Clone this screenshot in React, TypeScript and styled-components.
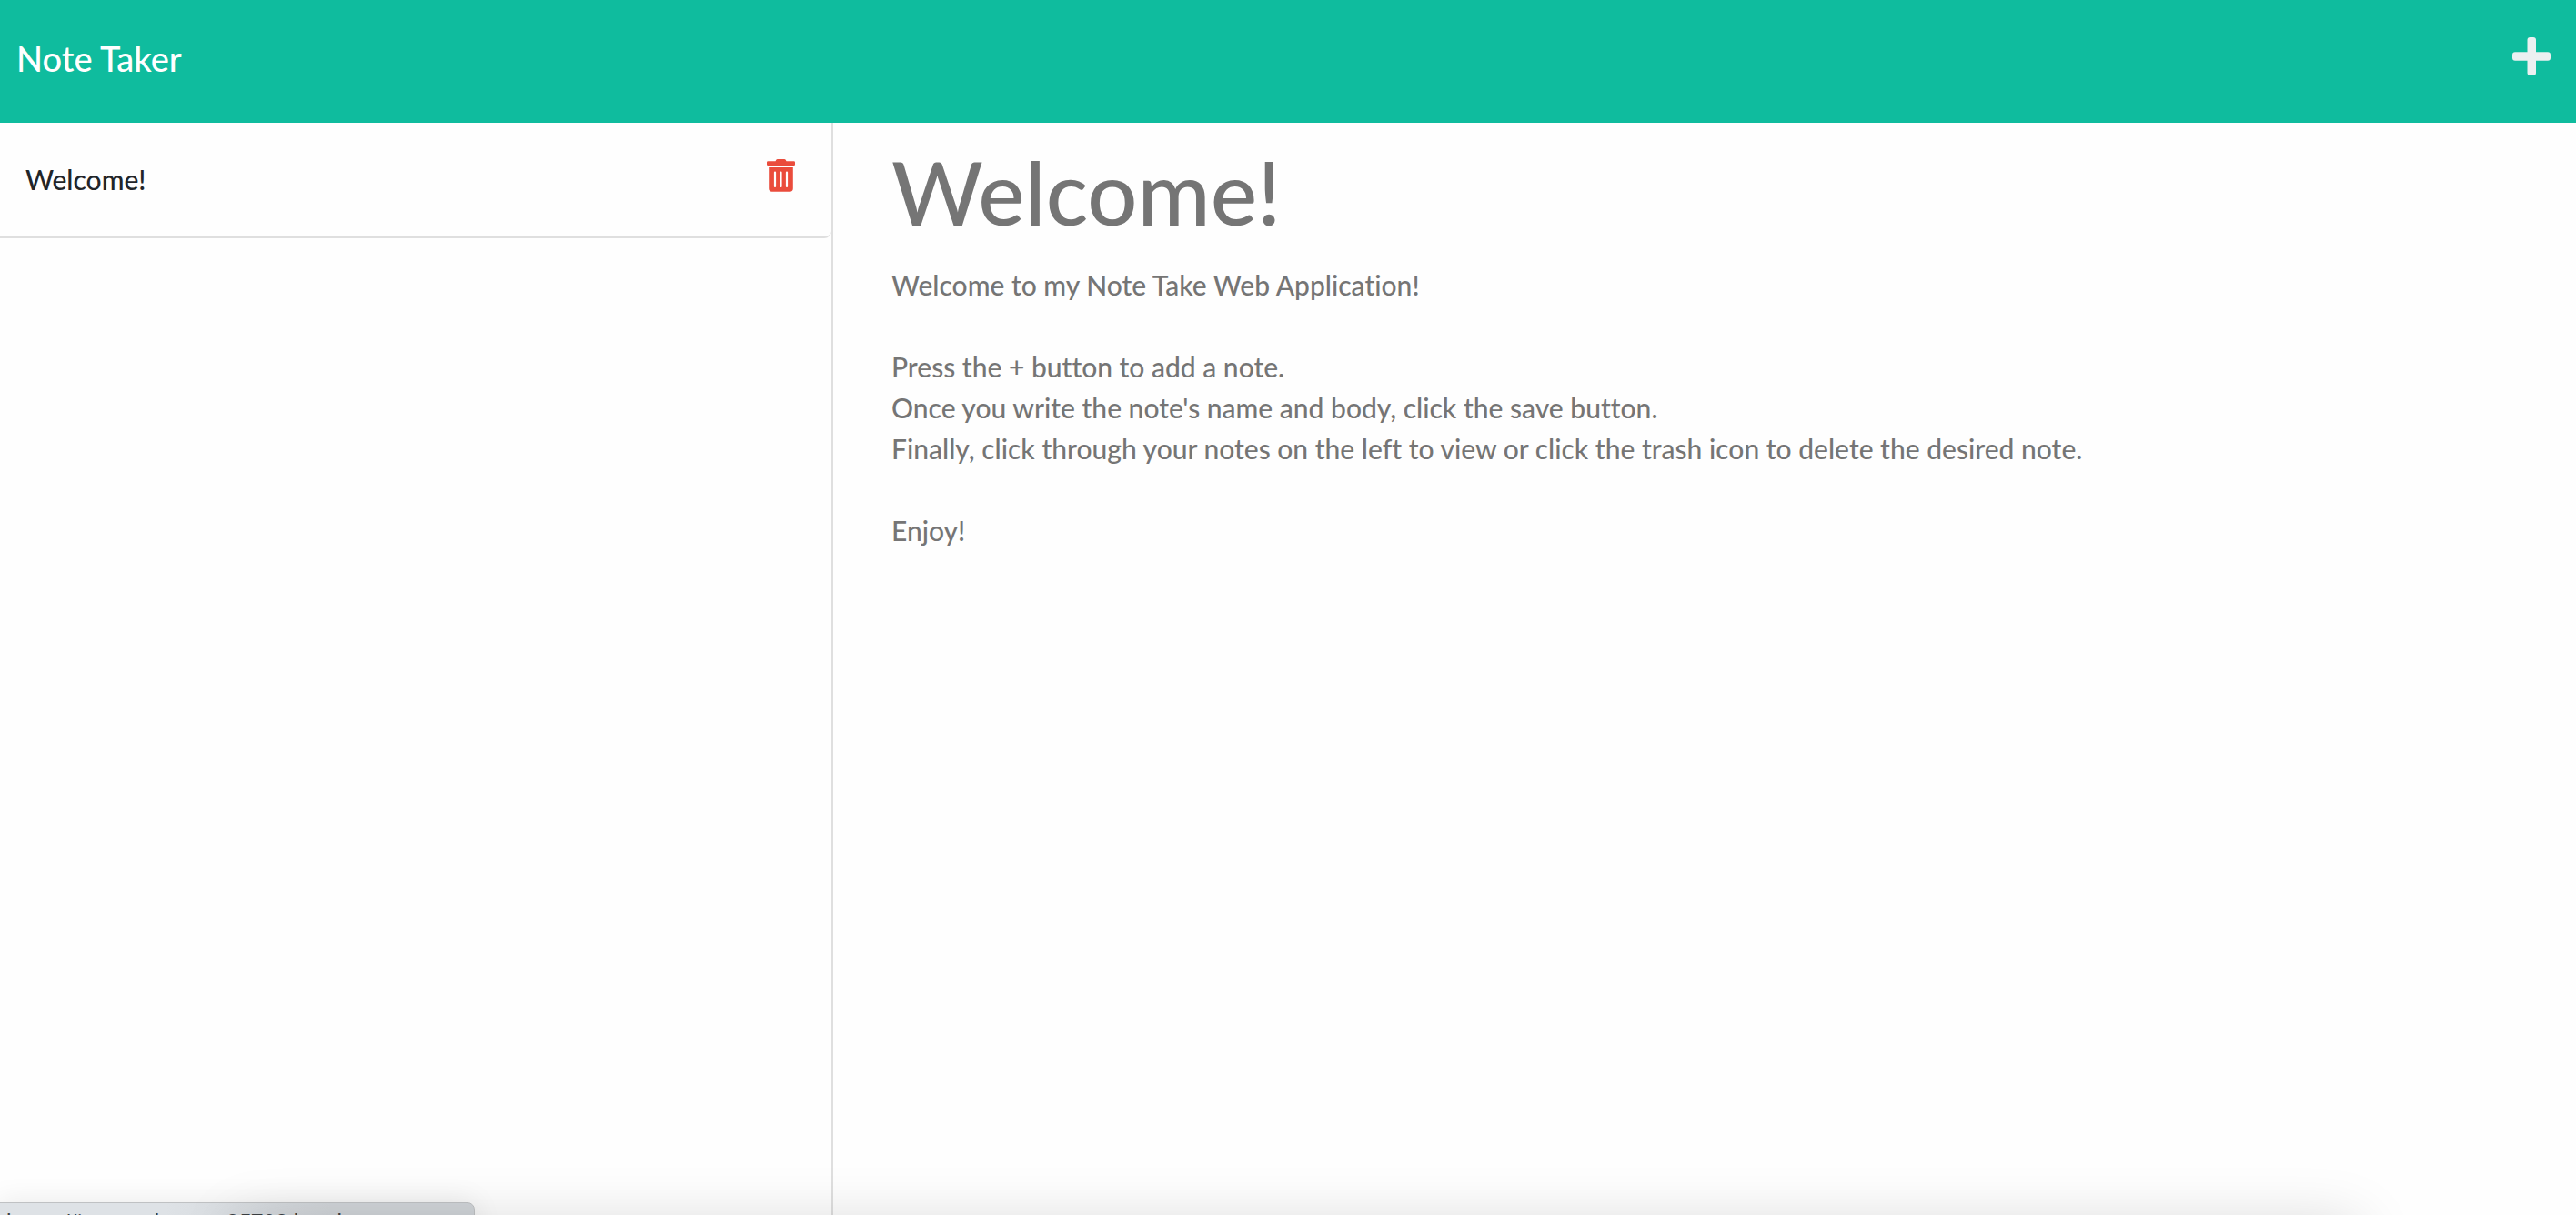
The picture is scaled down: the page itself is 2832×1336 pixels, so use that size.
import React from "react";
import styled, { createGlobalStyle } from "styled-components";

const GlobalStyle = createGlobalStyle`
  *, *::before, *::after { box-sizing: border-box; }
  body {
    margin: 0;
    background: #fefefe;
    color: #212529;
    font-family: "Lato Medium", Lato, "Open Sans", sans-serif;
    font-size: 30px;
    font-weight: 500;
    font-variant-ligatures: none;
    line-height: 45px;
  }
`;

const Page = styled.div`
  position: relative;
  display: flex;
  flex-direction: column;
  height: 100vh;
  overflow: hidden;
`;

const Navbar = styled.header`
  display: flex;
  align-items: flex-start;
  justify-content: space-between;
  padding: 36px 22px 43px 18px;
  background: #0fbc9e;
`;

const Brand = styled.a`
  color: #fff;
  font-size: 38px;
  line-height: 56px;
  text-decoration: none;
`;

const IconButton = styled.button`
  display: flex;
  flex: none;
  padding: 0;
  border: 0;
  background: none;
  color: ${(p) => p.color};
  cursor: pointer;
`;

const Main = styled.main`
  display: grid;
  flex: 1;
  grid-template-columns: calc(100% / 3 - 28px) 1fr;
`;

const Sidebar = styled.aside`
  border-right: 2px solid #dfdfdf;
`;

const NoteList = styled.ul`
  margin: 0;
  padding: 0;
  list-style: none;
`;

const NoteItem = styled.li`
  display: flex;
  align-items: flex-start;
  justify-content: space-between;
  padding: 40px 40px 40px 28px;
  border-bottom: 2px solid #dfdfdf;
  border-bottom-right-radius: 8px;
`;

const NoteLink = styled.a`
  color: inherit;
  text-decoration: none;
`;

const Note = styled.article`
  padding: 16px 64px;
  color: #757575;
`;

const NoteTitle = styled.h1`
  margin: 0 0 20px;
  font-size: 97px;
  font-weight: inherit;
  line-height: 120px;
`;

const NoteText = styled.p`
  margin: 0;
  white-space: pre-wrap;
`;

const BottomShade = styled.div`
  position: absolute;
  bottom: -70px;
  left: 260px;
  right: 240px;
  height: 60px;
  box-shadow: 0 0 64px rgba(0, 0, 0, 0.17);
  pointer-events: none;
`;

const StatusBubble = styled.div`
  position: absolute;
  bottom: -32px;
  left: -2px;
  width: 524px;
  height: 46px;
  padding: 5px 0 0 8px;
  border: 1px solid #bfc1c3;
  border-radius: 0 8px 0 0;
  background: linear-gradient(90deg, #dee2e6 35%, #d0d4d8 70%);
  box-shadow: 0 0 32px rgba(0, 0, 0, 0.09);
  color: #3c4043;
  font-family: Roboto, sans-serif;
  font-size: 24px;
  font-weight: 400;
  line-height: 32px;
  white-space: nowrap;
`;

const PlusIcon = () => (
  <svg width="48" height="48" viewBox="0 0 48 48" fill="currentColor" aria-hidden="true">
    <rect x="16.5" y="5" width="9.5" height="42" rx="3" />
    <rect x="0" y="21.2" width="42" height="9.5" rx="3" />
  </svg>
);

const TrashIcon = () => (
  <svg width="31" height="36" viewBox="0 0 31 36" fill="currentColor" aria-hidden="true">
    <path d="M1.2 2.2H9.5L10.3.8Q10.8 0 11.8 0H19.2Q20.2 0 20.7.8L21.5 2.2H29.8Q31 2.2 31 3.4V5.8Q31 7 29.8 7H1.2Q0 7 0 5.8V3.4Q0 2.2 1.2 2.2Z" />
    <path fillRule="evenodd" d="M2.2 9H28.8V32.3Q28.8 35.7 25.4 35.7H5.6Q2.2 35.7 2.2 32.3ZM9 13.4Q7.9 13.4 7.9 14.5V30Q7.9 31.1 9 31.1Q10.1 31.1 10.1 30V14.5Q10.1 13.4 9 13.4ZM15.5 13.4Q14.4 13.4 14.4 14.5V30Q14.4 31.1 15.5 31.1Q16.6 31.1 16.6 30V14.5Q16.6 13.4 15.5 13.4ZM22 13.4Q20.9 13.4 20.9 14.5V30Q20.9 31.1 22 31.1Q23.1 31.1 23.1 30V14.5Q23.1 13.4 22 13.4Z" />
  </svg>
);

const note = {
  title: "Welcome!",
  text: `Welcome to my Note Take Web Application!

Press the + button to add a note.
Once you write the note's name and body, click the save button.
Finally, click through your notes on the left to view or click the trash icon to delete the desired note.

Enjoy!`,
};

export default function App() {
  return (
    <>
      <GlobalStyle />
      <Page>
        <Navbar>
          <Brand href="#">Note Taker</Brand>
          <IconButton type="button" color="#ecf0f1" aria-label="New note">
            <PlusIcon />
          </IconButton>
        </Navbar>
        <Main>
          <Sidebar>
            <NoteList>
              <NoteItem>
                <NoteLink href="#">{note.title}</NoteLink>
                <IconButton type="button" color="#ea4c3c" aria-label="Delete note">
                  <TrashIcon />
                </IconButton>
              </NoteItem>
            </NoteList>
          </Sidebar>
          <Note>
            <NoteTitle>{note.title}</NoteTitle>
            <NoteText>{note.text}</NoteText>
          </Note>
        </Main>
        <StatusBubble>https://intense-lagoon-25792.herokuapp.com</StatusBubble>
        <BottomShade />
      </Page>
    </>
  );
}
